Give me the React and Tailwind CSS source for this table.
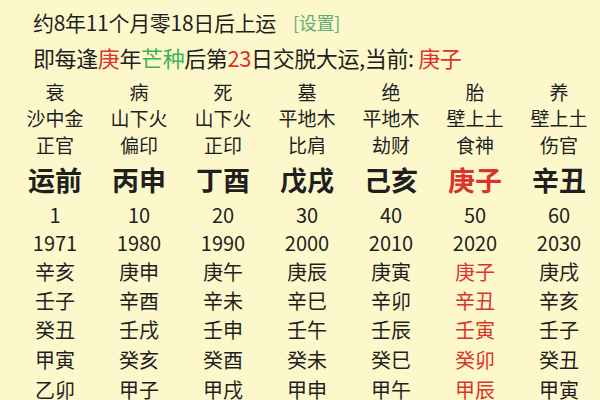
const cols = [
  { a: '衰', b: '沙中金', c: '正官', d: '运前', e: '1', f: '1971', g: ['辛亥', '壬子', '癸丑', '甲寅', '乙卯'] },
  { a: '病', b: '山下火', c: '偏印', d: '丙申', e: '10', f: '1980', g: ['庚申', '辛酉', '壬戌', '癸亥', '甲子'] },
  { a: '死', b: '山下火', c: '正印', d: '丁酉', e: '20', f: '1990', g: ['庚午', '辛未', '壬申', '癸酉', '甲戌'] },
  { a: '墓', b: '平地木', c: '比肩', d: '戊戌', e: '30', f: '2000', g: ['庚辰', '辛巳', '壬午', '癸未', '甲申'] },
  { a: '绝', b: '平地木', c: '劫财', d: '己亥', e: '40', f: '2010', g: ['庚寅', '辛卯', '壬辰', '癸巳', '甲午'] },
  { a: '胎', b: '壁上土', c: '食神', d: '庚子', e: '50', f: '2020', g: ['庚子', '辛丑', '壬寅', '癸卯', '甲辰'], cur: true },
  { a: '养', b: '壁上土', c: '伤官', d: '辛丑', e: '60', f: '2030', g: ['庚戌', '辛亥', '壬子', '癸丑', '甲寅'] },
]

// year rows get a touch taller toward the bottom
const rowH = ['h-[29px]', 'h-[29px]', 'h-[30px]', 'h-[30px]', 'h-[30px]']

export default function App() {
  return (
    <div
      className="w-[600px] h-[400px] overflow-hidden bg-[#fdf8cb] text-[#1f1f1f]"
      style={{ fontFamily: '"Noto Sans CJK SC", "Noto Sans", sans-serif' }}
    >
      {/* header lines */}
      <div className="pl-[33px] pt-[5px]">
        <div className="h-[35px] flex items-center text-[21px] tracking-[-0.3px]">
          约8年11个月零18日后上运
          <span className="ml-[17px] text-[18px] text-[#5cae74]">[设置]</span>
        </div>
        <div className="h-[35px] flex items-center text-[22px] tracking-[-0.4px]">
          即每逢<span className="text-[#d9352c]">庚</span>年
          <span className="text-[#3db35c]">芒种</span>后第
          <span className="text-[#d9352c]">23</span>日交脱大运,当前:&nbsp;
          <span className="text-[#d9352c]">庚子</span>
        </div>
      </div>

      {/* luck pillars table */}
      <div className="mt-[4px] pl-[13px] grid grid-cols-[repeat(7,84px)] text-center">
        {cols.map((c, i) => (
          <div key={i} className={c.cur ? 'flex flex-col text-[#d9352c]' : 'flex flex-col'}>
            <div className="h-[26px] flex items-center justify-center text-[19px] text-[#1f1f1f]">{c.a}</div>
            <div className="h-[26px] flex items-center justify-center text-[19px] text-[#1f1f1f]">{c.b}</div>
            <div className="h-[28px] flex items-center justify-center text-[19px] text-[#1f1f1f]">{c.c}</div>
            <div className="h-[42px] flex items-center justify-center text-[27px] font-bold">{c.d}</div>
            <div className="h-[28px] flex items-center justify-center text-[20px] text-[#1f1f1f]">{c.e}</div>
            <div className="h-[28px] flex items-center justify-center text-[20px] text-[#1f1f1f]">{c.f}</div>
            {c.g.map((t, j) => (
              <div key={j} className={`${rowH[j]} flex items-center justify-center text-[20px]`}>
                {t}
              </div>
            ))}
          </div>
        ))}
      </div>
    </div>
  )
}
